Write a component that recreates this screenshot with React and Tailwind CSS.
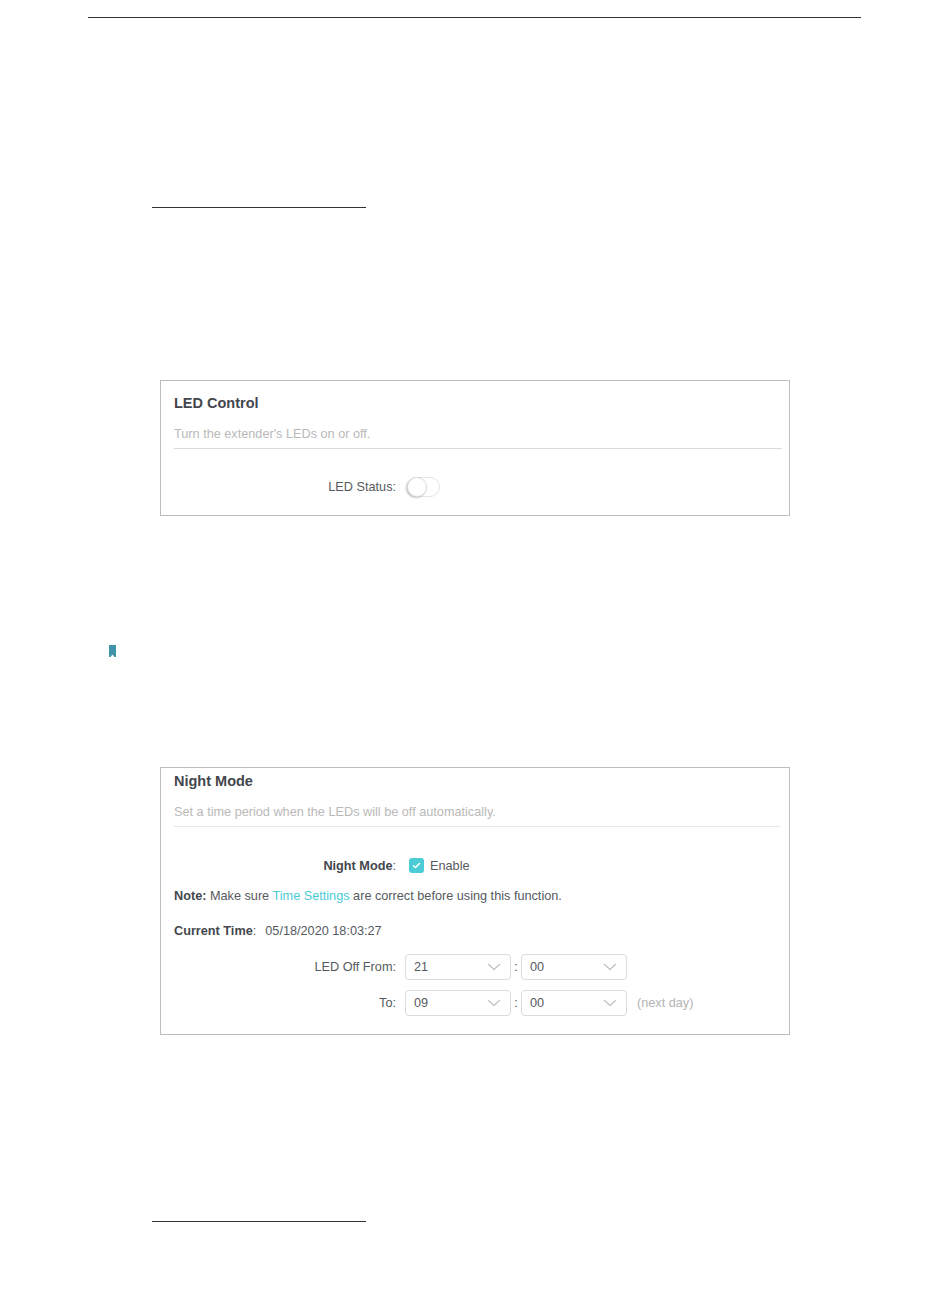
const LABEL = 'w-[222px] text-right'

function Chevron() {
  return (
    <svg width="14" height="8" viewBox="0 0 14 8" fill="none" className="ml-auto">
      <path d="M1 1l6 5.5L13 1" stroke="#c8c8c8" strokeWidth="1.6" />
    </svg>
  )
}

function TimeSelect({ value }) {
  return (
    <div className="flex h-[26px] w-[106px] items-center rounded-[4px] border border-[#dcdcdc] pl-[8px] pr-[9px] text-[#555a60]">
      <span>{value}</span>
      <Chevron />
    </div>
  )
}

function TimeRow({ label, hour, note, className }) {
  return (
    <div className={`flex items-center ${className}`}>
      <span className={`${LABEL} text-[#555a60]`}>{label}</span>
      <div className="ml-[9px]"><TimeSelect value={hour} /></div>
      <span className="w-[10px] text-center text-[#555a60]">:</span>
      <TimeSelect value="00" />
      {note && <span className="ml-[10px] text-[#b4b4b4]">{note}</span>}
    </div>
  )
}

export default function App() {
  return (
    <div className="h-[1297px] w-[950px] bg-white font-['Liberation_Sans',Arial,sans-serif] text-[12.7px] leading-none">
      <div className="pl-[88px] pt-[17px]">
        <div className="h-px w-[773px] bg-[#333]" />
      </div>

      <div className="ml-[152px] mt-[189px] h-px w-[214px] bg-[#333]" />

      {/* LED Control */}
      <section className="ml-[160px] mt-[172px] h-[136px] w-[630px] border border-[#bdbdbd] pl-[13px]">
        <h2 className="mt-[14px] text-[14.5px] font-bold leading-[17px] text-[#43474d]">LED Control</h2>
        <p className="mt-[16px] text-[#b9b9b9]">Turn the extender's LEDs on or off.</p>
        <div className="mt-[7px] h-px w-[608px] bg-[#d9d9d9]" />
        <div className="mt-[28px] flex items-center">
          <span className={`${LABEL} pt-[2px] text-[#555a60]`}>LED Status:</span>
          <div className="relative ml-[11px] h-[20px] w-[33px] rounded-full border border-[#e4e4e4]">
            <div className="absolute -left-px -top-px h-[20px] w-[20px] rounded-full border border-[#dcdcdc] bg-white shadow-[-1px_1px_2px_rgba(0,0,0,0.25)]" />
          </div>
        </div>
      </section>

      {/* bookmark */}
      <div className="ml-[109px] mt-[129px]">
        <svg width="7" height="12" viewBox="0 0 7 12" className="block">
          <path d="M0 0h7v12H5.5L3.5 9.5 1.5 12H0z" fill="#3f94a8" />
        </svg>
      </div>

      {/* Night Mode */}
      <section className="ml-[160px] mt-[110px] h-[268px] w-[630px] border border-[#bdbdbd] pl-[13px]">
        <h2 className="mt-[5px] text-[14.5px] font-bold leading-[17px] text-[#43474d]">Night Mode</h2>
        <p className="mt-[16px] text-[#b9b9b9]">Set a time period when the LEDs will be off automatically.</p>
        <div className="mt-[7px] h-px w-[606px] bg-[#e6e6e6]" />

        <div className="mt-[31px] flex items-center">
          <span className={`${LABEL} pt-[2px] text-[#555a60]`}><b className="text-[#43474d]">Night Mode</b>:</span>
          <div className="ml-[13px] flex h-[15px] w-[15px] items-center justify-center rounded-[3px] bg-[#4acbd6]">
            <svg width="9" height="7" viewBox="0 0 9 7" fill="none">
              <path d="M1 3.5L3.5 5.5 8 1" stroke="#fff" strokeWidth="1.6" />
            </svg>
          </div>
          <span className="ml-[6px] pt-[2px] text-[#555a60]">Enable</span>
        </div>

        <p className="mt-[17px] text-[#555a60]">
          <b className="text-[#43474d]">Note:</b> Make sure <span className="text-[#4acbd6]">Time Settings</span> are correct before using this function.
        </p>

        <p className="mt-[23px] text-[#555a60]">
          <b className="text-[#43474d]">Current Time</b>:<span className="ml-[9px]">05/18/2020 18:03:27</span>
        </p>

        <TimeRow label="LED Off From:" hour="21" className="mt-[16px]" />
        <TimeRow label="To:" hour="09" note="(next day)" className="mt-[10px]" />
      </section>

      <div className="ml-[152px] mt-[186px] h-px w-[214px] bg-[#333]" />
    </div>
  )
}
